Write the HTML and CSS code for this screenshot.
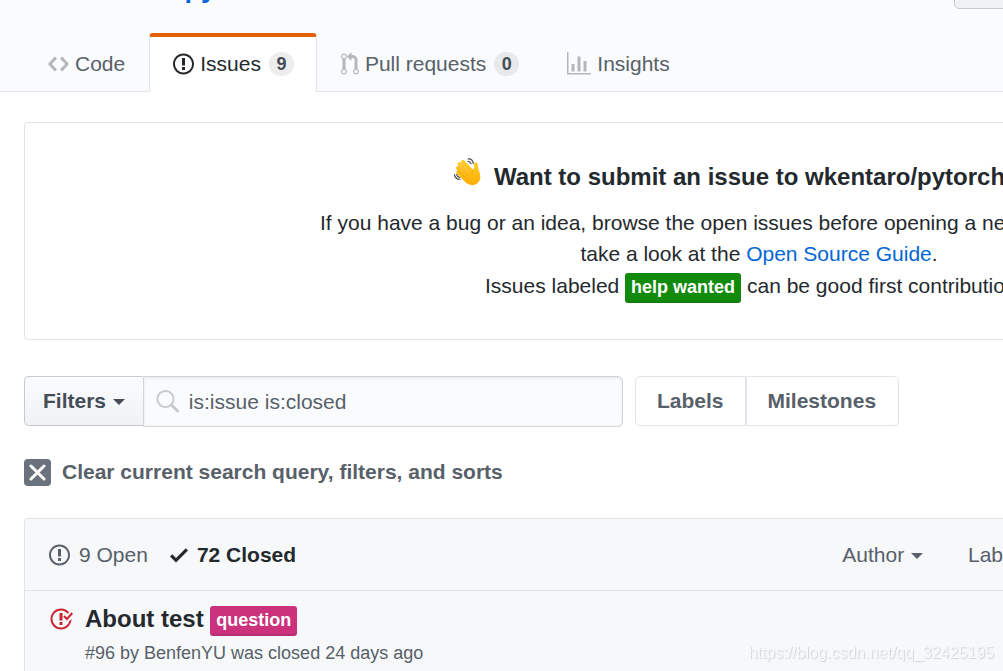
FILE: index.html
```html
<!DOCTYPE html>
<html lang="en">
<head>
  <meta charset="UTF-8">
  <title>Issues · wkentaro/pytorch-fcn</title>
  <link rel="stylesheet" href="styles.css">
</head>
<body>

<!-- Repository header -->
<header class="repo-header">
  <div class="container repo-head">
    <h1 class="repo-title">
      <svg class="repo-icon" width="18" height="24" viewBox="0 0 12 16"><path d="M4 9H3V8h1v1zm0-3H3v1h1V6zm0-2H3v1h1V4zm0-2H3v1h1V2zm8-1v12c0 .55-.45 1-1 1H6v2l-1.500-1.500L3 16v-2H1c-.55 0-1-.45-1-1V1c0-.55.45-1 1-1h10c.55 0 1 .45 1 1zm-1 10H1v2h2v-1h3v1h5v-2zm0-10H2v9h9V1z"/></svg>
      <a href="#">wkentaro</a> / <a href="#" class="repo-name">pytorch-fcn</a>
    </h1>
    <button class="btn watch-btn" aria-label="Watch"></button>
  </div>
  <nav class="container tabs">
    <a href="#" class="tab">
      <svg width="21" height="24" viewBox="0 0 14 16"><path d="M9.500 3L8 4.500 11.500 8 8 11.500 9.500 13 14 8 9.500 3zm-5 0L0 8l4.500 5L6 11.500 2.500 8 6 4.500 4.500 3z"/></svg>
      <span>Code</span>
    </a>
    <a href="#" class="tab selected">
      <svg width="21" height="24" viewBox="0 0 14 16"><path d="M7 2.300c3.140 0 5.700 2.560 5.700 5.700s-2.560 5.700-5.700 5.700A5.710 5.710 0 0 1 1.300 8c0-3.140 2.560-5.700 5.700-5.700zM7 1C3.140 1 0 4.140 0 8s3.140 7 7 7 7-3.140 7-7-3.140-7-7-7zm1 3H6v5h2V4zm0 6H6v2h2v-2z"/></svg>
      <span>Issues</span>
      <span class="counter">9</span>
    </a>
    <a href="#" class="tab">
      <svg width="18" height="24" viewBox="0 0 12 16"><path d="M11 11.280V5c-.03-.78-.34-1.470-.94-2.060C9.460 2.350 8.780 2.030 8 2H7V0L4 3l3 3V4h1c.27.02.48.11.69.31.21.2.3.42.31.69v6.280A1.993 1.993 0 0 0 10 15a1.993 1.993 0 0 0 1-3.720zm-1 2.920c-.66 0-1.200-.55-1.200-1.200 0-.65.55-1.200 1.200-1.200.65 0 1.200.55 1.200 1.200 0 .65-.55 1.200-1.200 1.200zM4 3c0-1.110-.89-2-2-2a1.993 1.993 0 0 0-1 3.720v6.560A1.993 1.993 0 0 0 2 15a1.993 1.993 0 0 0 1-3.720V4.720c.59-.34 1-.98 1-1.720zm-.8 10c0 .66-.55 1.200-1.200 1.200-.65 0-1.200-.55-1.200-1.200 0-.65.55-1.200 1.200-1.200.65 0 1.200.55 1.200 1.200zM2 4.200C1.340 4.200.8 3.650.8 3c0-.65.55-1.200 1.200-1.200.65 0 1.200.55 1.200 1.200 0 .65-.55 1.200-1.200 1.200z"/></svg>
      <span>Pull requests</span>
      <span class="counter">0</span>
    </a>
    <a href="#" class="tab">
      <svg width="24" height="24" viewBox="0 0 16 16"><path d="M16 14v1H0V0h1v14h15zM5 13H3V8h2v5zm4 0H7V3h2v10zm4 0h-2V6h2v7z"/></svg>
      <span>Insights</span>
    </a>
  </nav>
</header>

<main class="container">

  <!-- Contributing banner -->
  <section class="banner">
    <h3>
      <svg class="wave" width="27" height="27" viewBox="0 0 81 81">
        <defs>
          <linearGradient id="skin" x1="0" y1="0" x2="0" y2="81" gradientUnits="userSpaceOnUse">
            <stop offset="0" stop-color="#ffd02e"/>
            <stop offset="1" stop-color="#ffae05"/>
          </linearGradient>
        </defs>
        <g stroke="url(#skin)" stroke-width="11" stroke-linecap="round" fill="none">
          <path d="M27 11l30 32M16 18l32 33M11 30l30 30M12 43l28 27"/>
        </g>
        <path fill="url(#skin)" d="M30 60L55 34c4 2 6 1 6-4l-1-10c0-7 9-9 11-2l2 13c1 8 6 15 6 25 0 15-11 25-25 25-8 0-15-4-22-13z"/>
        <path d="M21 14l27 27M13 25l28 27M12 37l24 23" stroke="#e59600" stroke-width="2" fill="none" stroke-linecap="round"/>
        <path d="M61 31c-7 6-8 12-5 19" stroke="#f3a000" stroke-width="2" fill="none" stroke-linecap="round"/>
        <path d="M43 3c8-1 13 4 15 13M42 10c5 0 7 2 9 7M1 50c2 9 8 14 17 14M8 50c1 5 4 7 9 8" stroke="#50565c" stroke-width="4" fill="none" stroke-linecap="round"/>
      </svg>
      Want to submit an issue to wkentaro/pytorch-fcn?
    </h3>
    <p>If you have a bug or an idea, browse the open issues before opening a new one. You may also<br>take a look at the <a href="#">Open Source Guide</a>.</p>
    <p>Issues labeled <a href="#" class="label label-green">help wanted</a> can be good first contributions.</p>
  </section>

  <!-- Search and filters -->
  <div class="subnav">
    <form class="search">
      <button type="button" class="btn filters-btn">Filters <span class="caret"></span></button>
      <div class="search-field">
        <svg class="search-icon" width="24" height="24" viewBox="0 0 16 16"><path d="M15.700 13.300l-3.810-3.830A5.930 5.930 0 0 0 13 6c0-3.310-2.690-6-6-6S1 2.690 1 6s2.690 6 6 6c1.300 0 2.480-.41 3.470-1.110l3.830 3.810c.19.2.45.3.7.3.25 0 .52-.09.7-.3a.996.996 0 0 0 0-1.410v.01zM7 10.700c-2.590 0-4.700-2.110-4.700-4.700 0-2.590 2.110-4.700 4.700-4.700 2.590 0 4.700 2.110 4.700 4.700 0 2.590-2.110 4.700-4.700 4.700z"/></svg>
        <input type="text" aria-label="Search all issues" value="is:issue is:closed">
      </div>
    </form>
    <div class="subnav-links">
      <a href="#">Labels</a>
      <a href="#">Milestones</a>
    </div>
  </div>

  <a href="#" class="clear-query">
    <span class="clear-icon"><svg width="17" height="17" viewBox="0 0 17 17"><path d="M2 2l13 13M15 2L2 15"/></svg></span>
    Clear current search query, filters, and sorts
  </a>

  <!-- Issue list -->
  <section class="issues">
    <div class="issues-header">
      <div class="states">
        <a href="#">
          <svg width="21" height="24" viewBox="0 0 14 16"><path d="M7 2.300c3.140 0 5.700 2.560 5.700 5.700s-2.560 5.700-5.700 5.700A5.710 5.710 0 0 1 1.300 8c0-3.140 2.560-5.700 5.700-5.700zM7 1C3.140 1 0 4.140 0 8s3.140 7 7 7 7-3.140 7-7-3.140-7-7-7zm1 3H6v5h2V4zm0 6H6v2h2v-2z"/></svg>
          9 Open
        </a>
        <a href="#" class="selected">
          <svg width="18" height="24" viewBox="0 0 12 16"><path d="M12 5l-8 8-4-4 1.500-1.500L4 10l6.500-6.500L12 5z"/></svg>
          72 Closed
        </a>
      </div>
      <div class="menus">
        <button type="button">Author <span class="caret"></span></button>
        <button type="button">Labels <span class="caret"></span></button>
        <button type="button">Projects <span class="caret"></span></button>
        <button type="button">Milestones <span class="caret"></span></button>
        <button type="button">Sort <span class="caret"></span></button>
      </div>
    </div>
    <article class="issue">
      <svg class="closed-icon" width="24" height="24" viewBox="0 0 16 16"><path d="M7 10h2v2H7v-2zm2-6H7v5h2V4zm1.500 1.500l-1 1L12 9l4-4.500-1-1L12 7l-1.500-1.500zM8 13.700A5.710 5.710 0 0 1 2.300 8c0-3.140 2.560-5.700 5.700-5.700 1.830 0 3.450.88 4.500 2.200l.92-.92A6.947 6.947 0 0 0 8 1C4.140 1 1 4.140 1 8s3.140 7 7 7 7-3.140 7-7l-1.520 1.520c-.66 2.410-2.860 4.190-5.480 4.190v-.01z"/></svg>
      <div class="issue-body">
        <h4><a href="#" class="issue-title">About test</a> <a href="#" class="label label-pink">question</a></h4>
        <p>#96 by BenfenYU was closed 24 days ago</p>
      </div>
    </article>
  </section>

</main>

<div class="watermark">https://blog.csdn.net/qq_32425195</div>

</body>
</html>
```
FILE: styles.css
```css
* { box-sizing: border-box; margin: 0; padding: 0; }
body {
  overflow: hidden;
  font-family: "Liberation Sans", Arial, sans-serif; font-size: 21px; line-height: 32px;
  color: #24292e; background: #fff;
}
a { color: #0366d6; text-decoration: none; }
a:hover { text-decoration: underline; }
svg { fill: currentColor; flex-shrink: 0; }
button, input { font: inherit; color: inherit; }
button { cursor: pointer; }

.container { min-width: 1470px; max-width: 1470px; margin: 0 24px; }

/* Header */
.repo-header { background: #fafbfc; border-bottom: 1px solid #e1e4e8; }
.repo-head {
  display: flex; justify-content: space-between; align-items: flex-end;
  height: 9px; margin-bottom: 24px;
}
.repo-title { font-size: 27px; font-weight: normal; line-height: 42px; white-space: nowrap; }
.repo-icon { margin-right: 3px; color: #a3a8ad; }
.repo-name { font-weight: bold; }
.btn {
  background: linear-gradient(#fafbfc, #eff3f6); border: 1px solid #c6cbd1;
  border-radius: 5px; font-weight: bold; color: #444d56;
}
.watch-btn { width: 540px; height: 42px; background: #eff3f6; }

.tabs { display: flex; margin-bottom: -1px; }
.tab {
  display: flex; align-items: center; gap: 6px;
  height: 59px; padding: 2px 23px 0; border: 1px solid transparent; border-bottom: 0;
  color: #586069; white-space: nowrap;
}
.tab svg { color: #b4b7ba; }
.tab.selected {
  background: #fff; color: #24292e; padding: 0 22px 1px 23px;
  border-color: #e1e4e8; border-top: 4px solid #e36209; border-radius: 4px 4px 0 0;
}
.tab.selected svg { color: #24292e; }
.counter {
  min-width: 25px; margin-left: 2px; padding: 0 7px; border-radius: 12px; background: rgba(27, 31, 35, 0.08);
  font-size: 18px; font-weight: bold; line-height: 24px; text-align: center; color: #444d56;
}

/* Banner */
.banner {
  margin-top: 30px; padding: 35px 280px 36px; border: 1px solid #e1e4e8; border-radius: 4px;
  text-align: center; line-height: 31px;
}
.banner h3 { font-size: 24px; line-height: 36px; margin-bottom: 12px; }
.banner p + p { margin-top: 1px; }
.wave { margin-right: 6px; }
.label {
  display: inline-block; padding: 0 6px; border-radius: 3px;
  font-size: 18px; font-weight: bold; line-height: 28px; color: #fff;
  border-bottom: 2px solid rgba(27, 31, 35, 0.12);
}
.label-green { background: #128a0c; }
.label-pink { background: #cc317c; }

/* Subnav */
.subnav { display: flex; align-items: flex-start; gap: 12px; margin-top: 36px; }
.search { display: flex; align-items: flex-start; width: 599px; }
.filters-btn { height: 50px; padding: 0 18px; border-right: 0; border-radius: 5px 0 0 5px; white-space: nowrap; }
.caret {
  display: inline-block; vertical-align: middle; margin-left: 1px;
  border: 6px solid transparent; border-top-color: currentColor; border-bottom: 0;
}
.search-field {
  display: flex; align-items: center; flex: 1; height: 51px; padding-left: 11px;
  background: #fafbfc; border: 1px solid #d1d5da; border-radius: 0 5px 5px 0;
  box-shadow: inset 0 1px 3px rgba(27, 31, 35, 0.1);
}
.search-icon { color: #c6cbd1; }
.search-field input {
  flex: 1; min-width: 0; height: 48px; padding: 0 10px; border: 0; background: none;
  color: #586069; outline: none;
}
.subnav-links { display: flex; }
.subnav-links a {
  padding: 8px 21px; border: 1px solid #e1e4e8;
  font-weight: bold; color: #586069;
}
.subnav-links a:first-child { border-radius: 5px 0 0 5px; }
.subnav-links a:last-child { padding-right: 22px; border-radius: 0 5px 5px 0; }

.clear-query {
  display: flex; align-items: center; gap: 11px; margin-top: 29px;
  font-weight: bold; color: #586069;
}
.clear-icon {
  display: flex; align-items: center; justify-content: center;
  width: 27px; height: 27px; border-radius: 4px; background: #6a737d; color: #fff;
}
.clear-icon path { stroke: currentColor; stroke-width: 3; stroke-linecap: round; }

/* Issue list */
.issues { margin-top: 30px; border: 1px solid #e1e4e8; border-radius: 4px; background: #f6f8fa; }
.issues-header {
  display: flex; justify-content: space-between; align-items: center;
  height: 72px; padding: 0 38px 0 24px; border-bottom: 1px solid #e1e4e8; color: #586069;
}
.states { display: flex; gap: 22px; }
.states a { display: flex; align-items: center; gap: 9px; color: #586069; }
.states .selected { color: #24292e; font-weight: bold; }
.menus { display: flex; gap: 45px; }
.menus button { border: 0; background: none; white-space: nowrap; }
.issue { display: flex; gap: 12px; padding: 12px 24px; }
.closed-icon { margin-top: 4px; color: #cb2431; }
.issue h4 { margin-bottom: 3px; font-size: 24px; line-height: 32px; }
.issue h4 .label { vertical-align: top; margin-top: 3px; }
.issue-title { color: #24292e; }
.issue p { font-size: 18px; line-height: 28px; color: #586069; }

.watermark {
  position: fixed; right: 9px; bottom: 4px;
  font-size: 16px; line-height: 28px; color: #f6f8fa; text-shadow: 1px 1px 1px #d0d3d6;
}
```
